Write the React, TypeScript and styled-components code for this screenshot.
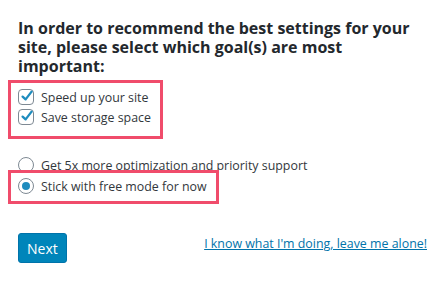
import styled, { createGlobalStyle } from "styled-components";

const GlobalStyle = createGlobalStyle`
  html, body {
    margin: 0;
    padding: 0;
    background: #ffffff;
  }
  body {
    font-family: "Open Sans", "Noto Sans", Arial, sans-serif;
    color: #32373c;
  }
`;

const Wrapper = styled.div`
  width: 445px;
  height: 285px;
  box-sizing: border-box;
  padding: 19px 18px 0 18px;
  display: flex;
  flex-direction: column;
  align-items: flex-start;
`;

const Title = styled.h2`
  margin: 0;
  width: 405px;
  font-size: 16px;
  line-height: 19px;
  font-weight: 700;
  color: #23282d;
`;

const Highlight = styled.div<{ $top: number; $bottom: number; $lift?: number }>`
  margin: ${(p) => -(p.$lift ?? 0)}px 0 0 -10px;
  padding: ${(p) => p.$top}px 9px ${(p) => p.$bottom}px 7px;
  border: 3px solid #f04c6b;
  display: flex;
  flex-direction: column;
`;

const Options = styled.div`
  margin-top: 4px;
  display: flex;
`;

const RadioGroup = styled.div`
  margin-top: 16px;
  display: flex;
  flex-direction: column;
  align-items: flex-start;
`;

const Row = styled.label`
  display: flex;
  align-items: center;
  gap: 7px;
  height: 20px;
  font-size: 12.4px;
  color: #32373c;
  white-space: nowrap;
`;

const Box = styled.span`
  position: relative;
  width: 16px;
  height: 16px;
  box-sizing: border-box;
  border: 1px solid #7e8993;
  border-radius: 4px;
  background: #fff;
  flex-shrink: 0;
  svg {
    position: absolute;
    left: 1px;
    top: -1px;
    overflow: visible;
  }
`;

const Circle = styled.span<{ $checked?: boolean }>`
  width: 16px;
  height: 16px;
  box-sizing: border-box;
  border: 1px solid #7e8993;
  border-radius: 50%;
  background: #fff;
  display: flex;
  align-items: center;
  justify-content: center;
  flex-shrink: 0;
  &::after {
    content: "";
    display: ${(p) => (p.$checked ? "block" : "none")};
    width: 8px;
    height: 8px;
    border-radius: 50%;
    background: #1e8cbe;
  }
`;

const Footer = styled.div`
  align-self: stretch;
  margin-top: 29px;
  display: flex;
  align-items: center;
  justify-content: space-between;
`;

const Button = styled.button`
  height: 30px;
  padding: 0 8px;
  border: 1px solid #0073aa;
  border-radius: 3px;
  background: #0085ba;
  color: #fff;
  font-family: inherit;
  font-size: 14px;
`;

const SkipLink = styled.a`
  color: #0073aa;
  font-size: 12.4px;
  text-decoration: underline;
  margin-right: 0;
  margin-top: -9px;
`;

function Check() {
  return (
    <Box>
      <svg width="14" height="14" viewBox="0 0 14 14">
        <path
          d="M2.6 7.6 L5.6 10.4 L11.6 2.6"
          fill="none"
          stroke="#1e8cbe"
          strokeWidth="2.3"
          strokeLinecap="round"
          strokeLinejoin="round"
        />
      </svg>
    </Box>
  );
}

export default function App() {
  return (
    <>
      <GlobalStyle />
      <Wrapper>
        <Title>
          In order to recommend the best settings for your site, please select
          which goal(s) are most important:
        </Title>
        <Options>
          <Highlight $top={4} $bottom={9}>
            <Row>
              <Check />
              Speed up your site
            </Row>
            <Row>
              <Check />
              Save storage space
            </Row>
          </Highlight>
        </Options>
        <RadioGroup>
          <Row>
            <Circle />
            Get 5x more optimization and priority support
          </Row>
          <Highlight $top={3} $bottom={5} $lift={5}>
            <Row>
              <Circle $checked />
              Stick with free mode for now
            </Row>
          </Highlight>
        </RadioGroup>
        <Footer>
          <Button>Next</Button>
          <SkipLink href="#">I know what I'm doing, leave me alone!</SkipLink>
        </Footer>
      </Wrapper>
    </>
  );
}
